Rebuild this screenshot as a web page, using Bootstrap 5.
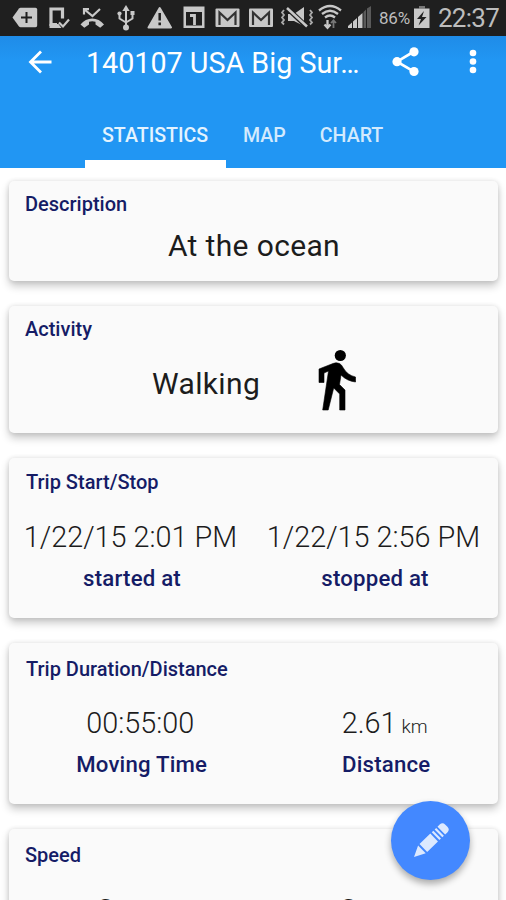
<!DOCTYPE html>
<html lang="en">
<head>
<meta charset="utf-8">
<meta name="viewport" content="width=device-width, initial-scale=1">
<title>Trip statistics</title>
<link href="https://cdn.jsdelivr.net/npm/bootstrap@5.3.0/dist/css/bootstrap.min.css" rel="stylesheet">
<style>
  html, body { height: 100%; }
  body { font-family: Roboto, "Liberation Sans", sans-serif; background: #fff; overflow: hidden; }
  .screen { width: 506px; height: 900px; }
  svg { display: block; flex: none; }
  .status-bar { height: 36px; background: #1f1f1f; color: #bdbdbd; }
  .status-bar .pct { width: 35px; padding-left: 3px; font-size: 17px; letter-spacing: -.2px; line-height: 36px; }
  .status-bar .clock { padding-left: 5px; font-size: 26px; line-height: 37px; letter-spacing: -.75px; }
  .app-header { height: 132px; background: linear-gradient(#1f8ce8, #2196f3 24px); color: #fff; }
  .title-row { height: 66px; }
  .app-title { width: 292px; font-size: 28.7px; line-height: 34px; padding-top: 10px; margin-left: 22px; }
  .tabs { height: 66px; padding-left: 85px; }
  .tabs .nav-link { color: #d3eafd; font-size: 19.6px; font-weight: 500; line-height: 24px; padding: 22px 17px 0; height: 66px; }
  .tabs .nav-link.active { color: #e4f3fe; border-bottom: 8px solid #fff; width: 141px; }
  .stat-card { width: 489px; margin-left: 9px; margin-bottom: 25px; background: #fafafa; border: 0; border-radius: 5px;
    box-shadow: 0 5px 8px rgba(0,0,0,.22), 0 0 5px rgba(0,0,0,.11); flex: none; }
  .cards { padding-top: 13px; }
  .stat-title { font-size: 20px; line-height: 24px; font-weight: 500; color: #151c66; padding: 11px 0 0 16px; }
  .stat-value { font-size: 29px; line-height: 34px; color: #1c1c1c; white-space: nowrap; }
  .stat-value.thin { font-weight: 300; font-size: 28.8px; }
  .stat-label { font-size: 22.2px; line-height: 26px; font-weight: 500; color: #151c66; letter-spacing: .2px; }
  .unit { font-size: 19px; line-height: 1; margin-left: -2px; }
  .c-desc { height: 100px; } .c-act { height: 127px; } .c-trip { height: 160px; } .c-dist { height: 161px; } .c-speed { height: 161px; }
  .c-trip .stat-title { padding-top: 12px; padding-left: 17px; }
  .c-dist .stat-title, .c-speed .stat-title { padding-top: 14px; }
  .c-dist .stat-title { padding-left: 17px; }
  .c-desc .stat-value { margin-top: 13px; margin-left: 1px; }
  .c-desc .stat-value, .c-act .stat-value { font-size: 30px; letter-spacing: .35px; }
  .walk-row { padding: 7px 0 0 143px; }
  .walk-row .stat-value { width: 166px; padding-top: 19px; }
  .pair { padding-top: 26px; }
  .pair > div { width: 243px; text-align: center; }
  .pair .stat-label { margin-top: 11px; padding-left: 3px; }
  .c-dist .pair { padding-top: 25px; padding-left: 12px; }
  .c-dist .pair > div + div { padding-left: 12px; }
  .c-speed .pair { padding-top: 26px; }
  .fab { position: absolute; left: 391px; top: 801px; width: 79px; height: 79px; background: #4388ff; box-shadow: 0 4px 7px rgba(0,0,0,.32); }
</style>
</head>
<body>
<div class="screen d-flex flex-column position-relative overflow-hidden">
  <div class="status-bar d-flex flex-shrink-0 text-nowrap">
    <svg width="44" height="36" viewBox="0 0 44 36"><path d="M12.5 17.5 19 8.500q.7-.7 1.500-.7h15q1.700 0 1.700 1.700v16q0 1.700-1.700 1.700h-15q-.8 0-1.500-.7z" fill="#c8c8c8"/><path d="M26.500 12v11M21 17.500h11" stroke="#1f1f1f" stroke-width="2"/></svg>
    <svg width="32" height="36" viewBox="44 0 32 36"><path d="M62.500 18.500V9H51v15.500h6" fill="none" stroke="#c8c8c8" stroke-width="3.200"/><path d="M49.500 24h9l3 4h-12z" fill="#c8c8c8"/><path d="m59 22.500 4 4 6-7" fill="none" stroke="#c8c8c8" stroke-width="2.200"/></svg>
    <svg width="34" height="36" viewBox="76 0 34 36"><path d="M80.500 24.500c6-8 17.500-8 23.500 0l-3.800 3.300-4.700-3.300v-2.800q-3.300-1-6.500 0v2.800l-4.700 3.300z" fill="#c8c8c8"/><path d="m85 10 7.500 6 7.500-7M84 14.500V9.200h5" fill="none" stroke="#c8c8c8" stroke-width="2.200"/></svg>
    <svg width="32" height="36" viewBox="110 0 32 36"><g fill="none" stroke="#c8c8c8" stroke-width="2"><path d="M126 9v18M119.500 14v4.500l6.500 4M132.500 13v5.500l-6.500 4"/></g><path d="m126 5 3.700 6h-7.400z" fill="#c8c8c8"/><circle cx="126" cy="27.500" r="3" fill="#c8c8c8"/><circle cx="119.500" cy="13.500" r="2.100" fill="#c8c8c8"/><path d="M130.500 11h4v4h-4z" fill="#c8c8c8"/></svg>
    <svg width="36" height="36" viewBox="142 0 36 36"><path d="M159.700 8 171 27.500h-22.500z" fill="#c8c8c8" stroke="#c8c8c8" stroke-width="2" stroke-linejoin="round"/><path d="M159.700 13v7.500M159.700 22.500v2.800" stroke="#1f1f1f" stroke-width="2.500"/></svg>
    <svg width="32" height="36" viewBox="178 0 32 36"><path d="M183.500 6.500h21V28h-21z" fill="#c8c8c8"/><path d="M186 12h16v13.500h-16z" fill="#1f1f1f"/><path d="M190 15.500h4.500V25" fill="none" stroke="#c8c8c8" stroke-width="2.800"/></svg>
    <svg width="34" height="36" viewBox="210 0 34 36"><rect x="215.500" y="8.500" width="24" height="18.500" rx="1" fill="#c8c8c8"/><path d="M219.500 25V12.500l8 7.500 8-7.500V25" fill="none" stroke="#333" stroke-width="2.200"/></svg>
    <svg width="32" height="36" viewBox="244 0 32 36"><rect x="249" y="8.500" width="24" height="18.500" rx="1" fill="#c8c8c8"/><path d="M253 25V12.500l8 7.500 8-7.500V25" fill="none" stroke="#333" stroke-width="2.200"/></svg>
    <svg width="40" height="36" viewBox="276 0 40 36"><path d="M288 14h6l10-7v19l-10-5h-6z" fill="#c8c8c8"/><path d="m287 8 20 19" stroke="#1f1f1f" stroke-width="5"/><path d="m287 8 20 18.500" stroke="#c8c8c8" stroke-width="2.500"/><path d="m284 10-2 2.500 2 2.500-2 2.500 2 2.500-2 2.500 2 2M310 10l2 2.500-2 2.500 2 2.500-2 2.500 2 2.500-2 2" fill="none" stroke="#aaa" stroke-width="1.800"/></svg>
    <svg width="30" height="36" viewBox="316 0 30 36"><g fill="none" stroke="#c8c8c8" stroke-width="2.300"><path d="M319 10.500q11-9 22 0M322 14q8-6.500 16 0M325 17.500q5-4 10 0"/><path d="M327.500 20v7m-3-2.500 3 3.300 3-3.300"/></g><path d="M333.500 28v-7m-2.500 2 2.500-2.700 2.500 2.700" fill="none" stroke="#777" stroke-width="1.800"/></svg>
    <svg width="30" height="36" viewBox="346 0 30 36"><path d="M348 28v-2l4-3.500V28zM353 28v-6.500l4-3.500v10zM358 28V17l4.500-4v15z" fill="#c8c8c8"/><path d="M363.500 28V12l2.500-2.500V28zM367 28V8.500L371 6v22z" fill="#5a5a5a"/></svg>
    <div class="pct">86%</div>
    <svg width="22" height="36" viewBox="411 0 22 36"><path d="M419 6h6v2.500h-6z" fill="#777"/><path d="M414 8.500h15.500V28H414z" fill="#c8c8c8"/><path d="m424 11-7 8h4l-2.500 6.500 8-8.500h-4.500z" fill="#1f1f1f"/></svg>
    <div class="clock">22:37</div>
  </div>

  <header class="app-header flex-shrink-0">
    <div class="title-row d-flex">
      <svg width="64" height="60" viewBox="0 36 64 60"><path d="M51.500 62H31M41 51.500 30.500 62 41 72.500" fill="none" stroke="#fff" stroke-width="2.800"/></svg>
      <div class="app-title text-nowrap">140107 USA Big Sur…</div>
      <svg width="62" height="60" viewBox="378 36 62 60"><path d="m414 51.500-17 10.200 17 10" fill="none" stroke="#fff" stroke-width="2.700"/><g fill="#fff"><circle cx="414" cy="51.800" r="4.600"/><circle cx="397" cy="61.700" r="4.600"/><circle cx="414" cy="71.500" r="4.600"/></g></svg>
      <svg width="66" height="60" viewBox="440 36 66 60" fill="#fff"><circle cx="473" cy="53" r="3.300"/><circle cx="473" cy="61.500" r="3.300"/><circle cx="473" cy="70" r="3.300"/></svg>
    </div>
    <nav class="tabs nav flex-nowrap">
      <a class="nav-link active" href="#">STATISTICS</a>
      <a class="nav-link" href="#">MAP</a>
      <a class="nav-link" href="#">CHART</a>
    </nav>
  </header>

  <main class="cards d-flex flex-column">
    <section class="card stat-card c-desc">
      <div class="stat-title">Description</div>
      <div class="stat-value text-center">At the ocean</div>
    </section>
    <section class="card stat-card c-act">
      <div class="stat-title">Activity</div>
      <div class="d-flex walk-row">
        <div class="stat-value">Walking</div>
        <svg width="40" height="64" viewBox="318 348 40 64"><circle cx="340.300" cy="355.500" r="5.600"/><path d="M333 363.500q3-1.500 6.500 0 2 1 3.500 4 4 7.500 12.500 9.500v5q-8.500-1-14.500-7l-1.500 9.500 5.500 5.500v20h-5.300V394l-6-6-5.500 22h-5.500L328.500 371l-4.500 2v9.500h-5V369z" stroke="#000" stroke-width=".6"/></svg>
      </div>
    </section>
    <section class="card stat-card c-trip">
      <div class="stat-title">Trip Start/Stop</div>
      <div class="d-flex pair">
        <div><div class="stat-value thin">1/22/15 2:01 PM</div><div class="stat-label">started at</div></div>
        <div><div class="stat-value thin">1/22/15 2:56 PM</div><div class="stat-label">stopped at</div></div>
      </div>
    </section>
    <section class="card stat-card c-dist">
      <div class="stat-title">Trip Duration/Distance</div>
      <div class="d-flex pair">
        <div><div class="stat-value thin">00:55:00</div><div class="stat-label">Moving Time</div></div>
        <div><div class="stat-value thin">2.61 <span class="unit">km</span></div><div class="stat-label">Distance</div></div>
      </div>
    </section>
    <section class="card stat-card c-speed">
      <div class="stat-title">Speed</div>
      <div class="d-flex pair">
        <div><div class="stat-value">3 <span class="unit">km/h</span></div></div>
        <div><div class="stat-value">3 <span class="unit">km/h</span></div></div>
      </div>
    </section>
  </main>

  <button class="fab btn rounded-circle border-0 p-0" aria-label="Edit">
    <svg width="79" height="79" viewBox="391 801 79 79"><g transform="translate(414 857) rotate(-44)" fill="#dce9ff"><path d="M0 0 11-5.500V5.500zM13-5.500H28V5.500H13zM30-5.500h2.200V5.500H30zM34-5.500h2.200V5.500H34zM38-5.500h3q4 0 4 4v3q0 4-4 4h-3z"/></g></svg>
  </button>
</div>
<script src="https://cdn.jsdelivr.net/npm/bootstrap@5.3.0/dist/js/bootstrap.bundle.min.js"></script>
</body>
</html>
